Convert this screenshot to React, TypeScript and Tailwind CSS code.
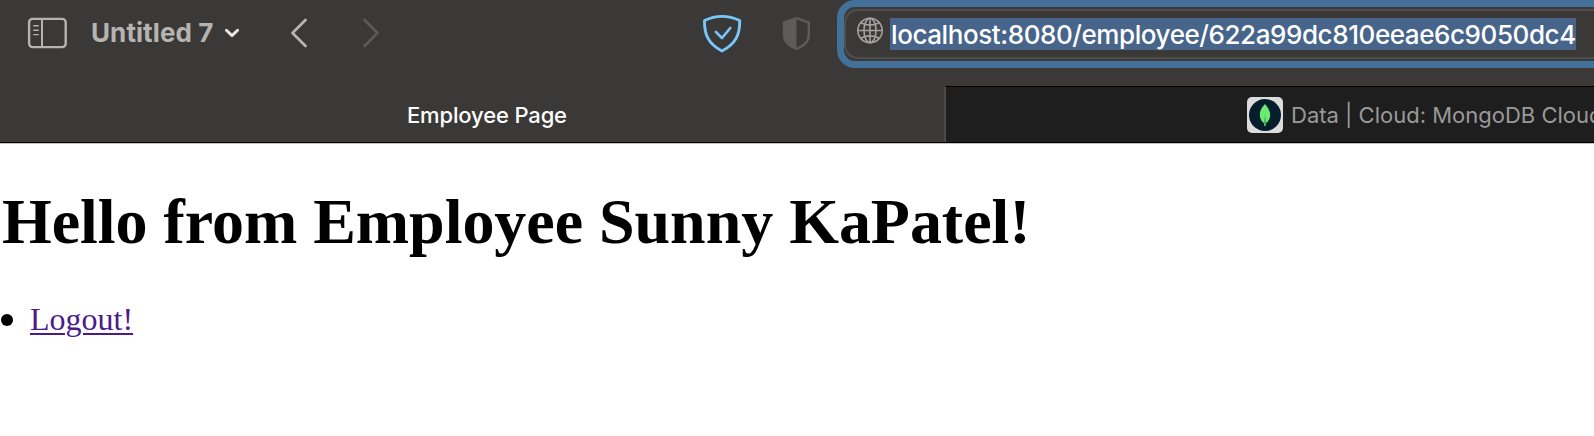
function SidebarIcon() {
  return (
    <svg className="block h-[32px] w-[40px] shrink-0" viewBox="0 0 40 32" fill="none" stroke="#b5b4b2" strokeLinecap="round">
      <rect x="2.1" y="1.9" width="36.6" height="28.2" rx="3.5" strokeWidth="2.4" />
      <path d="M15 2V30" strokeWidth="2" />
      <path d="M6.8 8.7H11.3M6.8 13.2H11.3M6.8 17.6H11.3" strokeWidth="1.4" />
    </svg>
  );
}

function Chevron({ d, className }: { d: string; className: string }) {
  return (
    <svg className={className} viewBox="0 0 20 32" fill="none" stroke="currentColor" strokeWidth="2.8" strokeLinecap="round" strokeLinejoin="round">
      <path d={d} />
    </svg>
  );
}

function Toolbar() {
  return (
    <div className="flex h-[86px] w-full items-start overflow-hidden">
      <div className="flex h-[66px] shrink-0 items-center pl-[27px]">
        <SidebarIcon />
        <span className="ml-[24px] w-[124px] text-[26px] leading-[32px] font-bold tracking-[0.08px] whitespace-nowrap text-[#b5b4b2]">Untitled 7</span>
        <svg className="ml-[9px] block h-[10px] w-[16px]" viewBox="0 0 16 10" fill="none" stroke="#e8e8e7" strokeWidth="2.9" strokeLinecap="round" strokeLinejoin="round">
          <path d="M2.4 2.2L8 7.6L13.6 2.2" />
        </svg>
        <Chevron d="M16.500 3L3.500 16L16.500 29" className="ml-[49px] block h-[32px] w-[20px] text-[#b5b4b2]" />
        <Chevron d="M3.500 3L16.500 16L3.500 29" className="ml-[52px] block h-[32px] w-[20px] text-[#5b5a58]" />
      </div>
      <svg className="mt-[14px] ml-[321px] block h-[40px] w-[40px] shrink-0" viewBox="0 0 40 40" fill="none" stroke="#78c6fa" strokeLinecap="round" strokeLinejoin="round">
        <path d="M2.500 6.500Q11 2.400 20 2.400T37.700 6.500C38 20 34 30 20 37C6 30 2.200 20 2.500 6.500Z" strokeWidth="2.900" />
        <path d="M13.800 17.900L20 24L28.300 14" strokeWidth="2.700" />
      </svg>
      <svg className="mt-[16px] ml-[39px] block h-[36px] w-[30px] shrink-0" viewBox="0 0 30 36" fill="none">
        <path d="M15.500 2.200L27.800 6.500V19C27.800 26 22 30.500 15.500 33C9 30.500 3 26 3 19V6.500Z" stroke="#5d5c5a" strokeWidth="2.400" strokeLinejoin="round" />
        <path d="M15.500 2L3 6.500V19C3 26 9 30.500 15.500 33Z" fill="#5d5c5a" />
      </svg>
      <div className="ml-[26px] h-[68px] w-[800px] shrink-0 rounded-[18px] border-[7px] border-[#43719a] bg-[#3a3937] py-[2px]">
        <div className="flex h-[50px] items-center rounded-[14px] border-2 border-[#514f4e] pl-[11px]">
          <svg className="mb-[8px] block h-[27px] w-[27px] shrink-0" viewBox="0.5 0 27 27" fill="none" stroke="#a3a2a1" strokeWidth="1.600">
            <circle cx="13.500" cy="13.500" r="12.200" />
            <ellipse cx="13.500" cy="13.500" rx="6" ry="12.200" />
            <path d="M13.500 1.300V25.700M1.300 13.500H25.700M4.200 5.700Q13.500 10.500 22.800 5.700M4.200 21.300Q13.500 16.500 22.800 21.300" />
          </svg>
          <div className="ml-[6px] h-[32px] w-[686px] shrink-0 bg-[#47648a] pl-[1px] text-[26px] leading-[34px] font-medium tracking-[-0.42px] whitespace-nowrap text-white">localhost:8080/employee/622a99dc810eeae6c9050dc4</div>
        </div>
      </div>
    </div>
  );
}

function TabBar() {
  return (
    <div className="flex h-[56px] w-full text-[22px] leading-[30px] whitespace-nowrap">
      <div className="flex w-[944px] shrink-0 pt-[14px] pl-[407px]">
        <span className="font-medium tracking-[-0.15px] text-white">Employee Page</span>
      </div>
      <div className="flex flex-1 overflow-hidden border-t border-l-2 border-t-black border-l-[#4b4a48] bg-[#1e1e1e] pl-[301px]">
        <svg className="mt-[10px] block h-[36px] w-[36px] shrink-0" viewBox="0 0 36 36">
          <rect width="36" height="36" rx="5" fill="#dcdcdc" />
          <circle cx="18" cy="18" r="16" fill="#061e2b" />
          <path d="M18 7C14 11 12.700 14.500 12.800 18C12.900 22 15 25 17.300 26.500V29H18.700V26.500C21.500 24.500 23.200 21.500 23.200 18C23.200 14.500 21.500 11 18 7Z" fill="#6aec74" />
          <path d="M18 17L17.400 26.500L18.700 26.500Z" fill="#247a48" />
        </svg>
        <span className="mt-[13px] ml-[8px] text-[#9a9a9a]">Data | Cloud: MongoDB Cloud</span>
      </div>
    </div>
  );
}

export default function App() {
  return (
    <div className="h-[436px] w-full overflow-hidden bg-white">
      <header className="h-[144px] w-full border-b border-[#c4c3c0] bg-[#3a3937] font-[Inter,sans-serif]">
        <Toolbar />
        <TabBar />
        <div className="h-px bg-black" />
      </header>
      <main className="font-['Liberation_Serif',serif] text-black">
        <h1 className="pt-[41px] pl-[2px] text-[64px] leading-[74px] font-bold tracking-[-0.04px] whitespace-nowrap">Hello from Employee Sunny KaPatel!</h1>
        <ul className="mt-[42px] flex items-center text-[32px] leading-[36px]">
          <li className="flex items-center">
            <span className="mt-[2px] ml-[1px] h-[12px] w-[12px] rounded-full bg-black" />
            <a href="#logout" className="ml-[17px] text-[#4b1b88] underline decoration-2 underline-offset-[3px]">Logout!</a>
          </li>
        </ul>
      </main>
    </div>
  );
}
